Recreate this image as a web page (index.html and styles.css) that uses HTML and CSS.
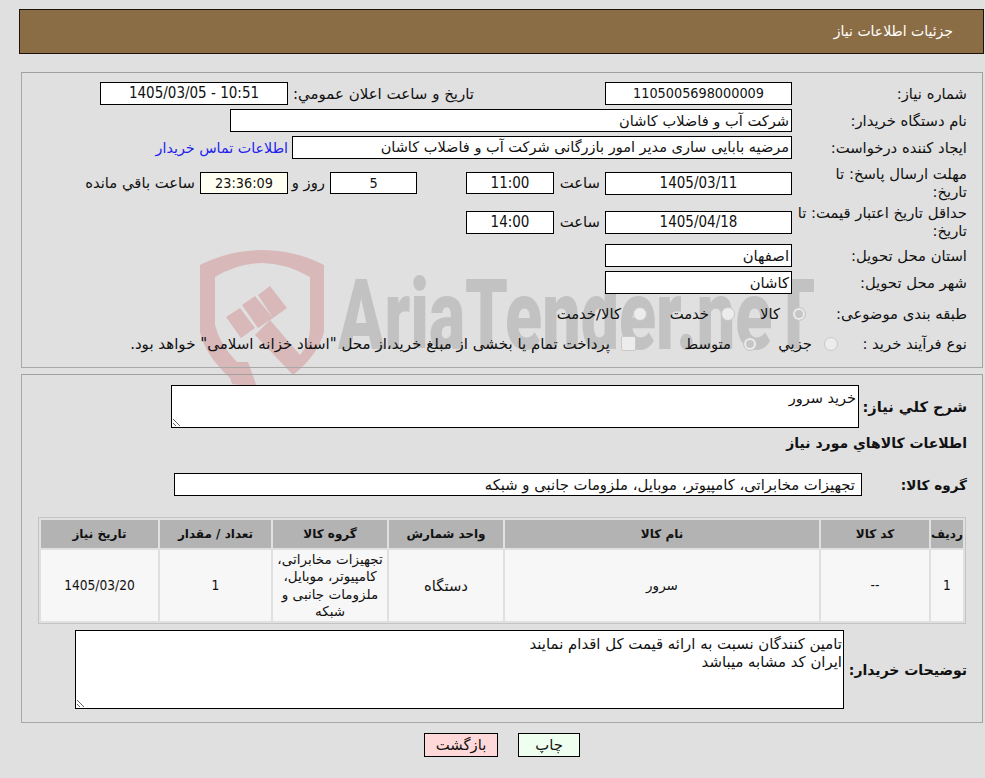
FILE: index.html
```html
<!DOCTYPE html>
<html lang="fa" dir="rtl">
<head>
<meta charset="utf-8">
<title>جزئیات اطلاعات نیاز</title>
<link rel="stylesheet" href="styles.css">
</head>
<body>
<div class="watermark" aria-hidden="true">
  <svg class="wm-shield" viewBox="195 245 140 145" width="140" height="145">
    <path class="wm-red" d="M200 265 Q230 250 262 250 Q295 250 324 265 V332 Q318 355 293 375 L255 335 L270 320 L300 355 Q310 343 310 328 V277 Q285 263 262 263 Q238 263 215 277 V325 Q220 345 237 362 L248 362 L257 387 L232 384 L230 378 Q205 355 200 332 Z"/>
    <path class="wm-red" d="M226 317 L240 308 L255 328 L241 338 Z M242 305 L255 296 L273 318 L258 328 Z M258 295 L270 286 L287 308 L273 318 Z"/>
  </svg>
  <span class="wm-text" dir="ltr">AriaTender.neT</span>
</div>

<header class="title-bar">جزئیات اطلاعات نیاز</header>

<section class="panel panel-info">
  <div class="row">
    <span class="label">شماره نیاز:</span>
    <span class="box box-md center">1105005698000009</span>
    <span class="label-inline announce">تاریخ و ساعت اعلان عمومي:</span>
    <span class="box box-md2 center date">10:51 - 1405/03/05</span>
  </div>
  <div class="row">
    <span class="label">نام دستگاه خریدار:</span>
    <span class="box box-xl">شرکت آب و فاضلاب کاشان</span>
  </div>
  <div class="row">
    <span class="label">ایجاد کننده درخواست:</span>
    <span class="box box-lg">مرضیه بابایی ساری مدیر امور بازرگانی شرکت آب و فاضلاب کاشان</span>
    <a class="contact" href="#">اطلاعات تماس خریدار</a>
  </div>
  <div class="row row-tall row-first-tall">
    <span class="label">مهلت ارسال پاسخ: تا<br>تاریخ:</span>
    <span class="box box-md center date">1405/03/11</span>
    <span class="label-inline hour">ساعت</span>
    <span class="box box-sm center date">11:00</span>
    <span class="box box-sm days center">5</span>
    <span class="label-inline day-word">روز و</span>
    <span class="box box-sm timer center">23:36:09</span>
    <span class="label-inline left-word">ساعت باقي مانده</span>
  </div>
  <div class="row row-tall row-second-tall">
    <span class="label">حداقل تاریخ اعتبار قیمت: تا<br>تاریخ:</span>
    <span class="box box-md center date">1405/04/18</span>
    <span class="label-inline hour">ساعت</span>
    <span class="box box-sm center date">14:00</span>
  </div>
  <div class="row">
    <span class="label">استان محل تحویل:</span>
    <span class="box box-md">اصفهان</span>
  </div>
  <div class="row">
    <span class="label">شهر محل تحویل:</span>
    <span class="box box-md">کاشان</span>
  </div>
  <div class="row row-choice row-cat">
    <span class="label">طبقه بندی موضوعی:</span>
    <span class="choice cat-1"><i class="radio on"></i>کالا</span>
    <span class="choice cat-2"><i class="radio"></i>خدمت</span>
    <span class="choice cat-3"><i class="radio"></i>کالا/خدمت</span>
  </div>
  <div class="row row-choice row-proc">
    <span class="label">نوع فرآیند خرید :</span>
    <span class="choice proc-1"><i class="radio"></i>جزیي</span>
    <span class="choice proc-2"><i class="radio on"></i>متوسط</span>
    <span class="choice proc-3"><i class="check"></i>پرداخت تمام یا بخشی از مبلغ خرید،از محل "اسناد خزانه اسلامی" خواهد بود.</span>
  </div>
</section>

<section class="panel panel-goods">
  <div class="row row-desc">
    <span class="label-bold">شرح کلي نیاز:</span>
    <textarea class="area area-need" readonly>خرید سرور</textarea>
  </div>
  <h2 class="heading">اطلاعات کالاهاي مورد نیاز</h2>
  <div class="row row-group">
    <span class="label-bold">گروه کالا:</span>
    <span class="box box-group">تجهیزات مخابراتی، کامپیوتر، موبایل، ملزومات جانبی و شبکه</span>
  </div>
  <table class="goods">
    <colgroup>
      <col class="c1"><col class="c2"><col class="c3"><col class="c4"><col class="c5"><col class="c6"><col class="c7">
    </colgroup>
    <thead>
      <tr><th>ردیف</th><th>کد کالا</th><th>نام کالا</th><th>واحد شمارش</th><th>گروه کالا</th><th>تعداد / مقدار</th><th>تاریخ نیاز</th></tr>
    </thead>
    <tbody>
      <tr><td class="num">1</td><td class="num">--</td><td class="td-name">سرور</td><td>دستگاه</td><td class="td-group">تجهیزات مخابراتی، کامپیوتر، موبایل، ملزومات جانبی و شبکه</td><td class="num">1</td><td class="num">1405/03/20</td></tr>
    </tbody>
  </table>
  <div class="row row-notes">
    <span class="label-bold">توضیحات خریدار:</span>
    <textarea class="area area-notes" readonly>تامین کنندگان نسبت به ارائه قیمت کل اقدام نمایند
ایران کد مشابه میباشد</textarea>
  </div>
</section>

<div class="actions">
  <button class="btn btn-print" type="button">چاپ</button>
  <button class="btn btn-back" type="button">بازگشت</button>
</div>
</body>
</html>
```

FILE: styles.css
```css
* { box-sizing: border-box; }
html, body { margin: 0; padding: 0; }
body {
  position: relative;
  width: 985px;
  height: 778px;
  overflow: hidden;
  background: #e0e0e0;
  color: #111;
  font-family: "DejaVu Sans", sans-serif;
  font-size: 14.8px;
  line-height: 18px;
}

.watermark { position: absolute; left: 0; top: 0; width: 985px; height: 400px; pointer-events: none; }
.wm-shield { position: absolute; left: 195px; top: 245px; }
.wm-red { fill: #d9b8ba; }
.wm-text {
  position: absolute;
  left: 338px;
  top: 256px;
  font-family: "Roboto", sans-serif;
  font-weight: 900;
  font-size: 98px;
  line-height: 120px;
  color: #c2c2c2;
  white-space: nowrap;
  transform: scaleX(0.695);
  transform-origin: left top;
}

.title-bar {
  position: relative;
  margin: 9px 1px 0 0;
  width: 965px;
  height: 45px;
  padding: 0 30px 0 0;
  background: #8b6d45;
  border: 1px solid #1c140a;
  color: #fff;
  font-size: 14px;
  line-height: 43px;
}

.panel {
  position: relative;
  width: 962px;
  margin-right: 2px;
  border: 1px solid #a8a8a8;
  border-top-color: #a0a0a0;
  border-right-color: #a0a0a0;
}
.panel-info { margin-top: 18px; height: 296px; padding: 9px 15px 0 0; }
.panel-goods { margin-top: 6px; height: 349px; padding: 10px 15px 0 0; }

.row { display: flex; align-items: center; min-height: 23px; margin-top: 4px; }
.panel-info .row:first-child { margin-top: 0; }
.row-tall { height: 36px; }
.row-first-tall { margin-top: 6px; }
.row-second-tall { margin-top: 3px; }
.row-cat { margin-top: 8px; }
.row-proc { margin-top: 7px; }

.label { flex: none; width: 175px; white-space: nowrap; }
.label-inline { flex: none; white-space: nowrap; }
.announce { margin: 0 131px 0 5px; width: 181px; font-size: 15px; }
.contact { color: #2222ee; text-decoration: none; margin-right: 4px; white-space: nowrap; font-size: 14.3px; }

.box {
  flex: none;
  display: block;
  height: 23px;
  padding: 0 2px;
  background: #fff;
  border: 1px solid #000;
  line-height: 21px;
  white-space: nowrap;
  overflow: hidden;
}
.center { font-family: "DejaVu Sans Condensed", "DejaVu Sans", sans-serif; font-size: 14.3px; text-align: center; }
.center.date { font-size: 15px; }
.num { font-family: "DejaVu Sans Condensed", "DejaVu Sans", sans-serif; font-size: 13.6px; }
.box-md { width: 187px; }
.box-md2 { width: 188px; }
.box-xl { width: 562px; font-size: 14.6px; }
.box-lg { width: 500px; font-size: 14.5px; }
.box-sm { width: 88px; height: 22px; line-height: 20px; }
.row-second-tall .box-sm, .row-second-tall .box-md { height: 23px; line-height: 21px; }
.hour { width: 41px; margin: 0 5px; }
.days { width: 87px; margin-right: 49px; }
.day-word { width: 28px; margin: 0 5px 0 9px; }
.timer { background: #fffff2; }
.left-word { margin-right: 5px; }

.choice { display: flex; align-items: center; white-space: nowrap; }
.row-cat .label { width: 161px; }
.row-proc .label { width: 129px; }
.radio {
  flex: none;
  width: 14px;
  height: 14px;
  border-radius: 50%;
  border: 1px solid #c8c8c8;
  background: #ececec;
  margin-left: 12px;
}
.radio.on { background: #c6c6c6; box-shadow: inset 0 0 0 2px #ececec; }
.check {
  flex: none;
  width: 15px;
  height: 15px;
  border: 1px solid #c8c8c8;
  border-radius: 2px;
  background: #ececec;
  margin-left: 11px;
}
.cat-1 { width: 71px; }
.cat-2 { width: 88px; }
.proc-1 { width: 81px; }
.proc-2 { width: 121px; }
.proc-3 { font-size: 15.05px; }

.label-bold { flex: none; font-weight: 700; font-size: 14px; white-space: nowrap; }
.row-desc { margin-top: 0; }
.row-desc .label-bold { width: 108px; font-size: 14.6px; }
.area {
  flex: none;
  display: block;
  background: #fff;
  border: 1px solid #000;
  border-radius: 0;
  padding: 3px 2px 0 0;
  margin: 0;
  color: #111;
  font: inherit;
  outline: none;
}
.area-need { width: 688px; height: 43px; font-size: 14.5px; }
.area-notes { width: 769px; height: 79px; padding: 4px 1px 0 0; font-size: 14.9px; }

.heading { margin: 6px 0 0; height: 18px; font-size: 14px; line-height: 18px; font-weight: 700; }
.row-group { margin-top: 21px; }
.row-group .label-bold { width: 105px; font-size: 13.6px; }
.box-group { width: 688px; padding: 0 6px; }

.goods {
  width: 928px;
  margin: 21px 1px 0 0;
  border: 1px solid #c4c4c4;
  border-spacing: 2px;
  border-collapse: separate;
  table-layout: fixed;
}
.goods th { height: 28px; padding: 0; background: #b3b3b3; font-size: 12px; font-weight: 700; line-height: 16px; text-align: center; }
.goods td { height: 71px; padding: 0 6px; background: #f7f7f7; text-align: center; line-height: 17px; }
.goods .td-group { padding: 0 3px; font-size: 13.5px; line-height: 17.3px; }
.goods .td-name { font-size: 13.5px; }
.c1 { width: 32px; }
.c2 { width: 108px; }
.c3 { width: 314px; }
.c4 { width: 114px; }
.c5 { width: 114px; }
.c6 { width: 111px; }
.c7 { width: 117px; }

.row-notes { margin-top: 6px; }
.row-notes .label-bold { width: 123px; }

.actions { display: flex; gap: 20px; margin: 10px 405px 0 0; }
.btn {
  height: 24px;
  padding: 0;
  border: 1px solid #000;
  border-radius: 0;
  color: #111;
  font: inherit;
}
.btn-print { width: 62px; background: #efffef; }
.btn-back { width: 74px; background: #ffd9d9; }
```
